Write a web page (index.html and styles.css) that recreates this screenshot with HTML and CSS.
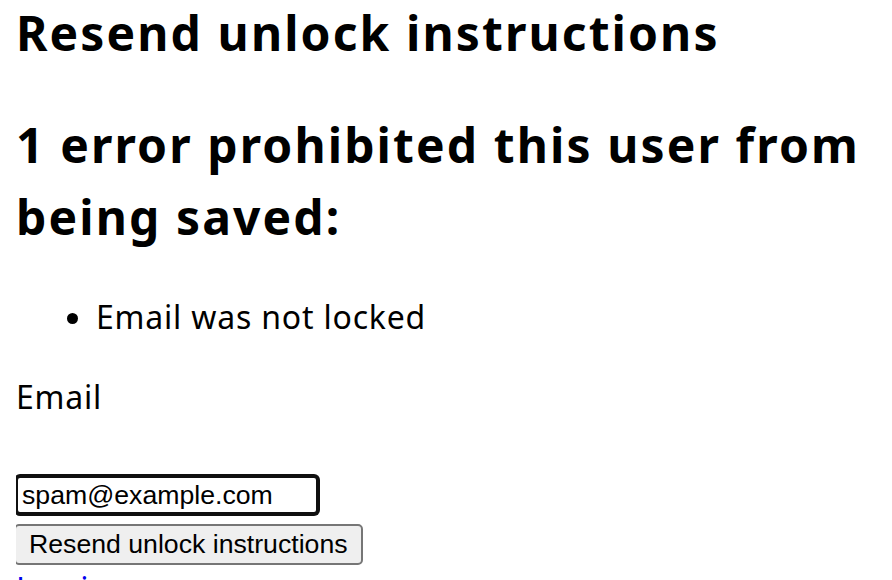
FILE: index.html
```html
<!DOCTYPE html>
<html lang="en">
<head>
<meta charset="utf-8">
<title>Resend unlock instructions</title>
<link rel="stylesheet" href="styles.css">
</head>
<body class="page">
  <h2 class="title">Resend unlock instructions</h2>
  <form class="form" action="#" method="post">
    <div class="errors">
      <h2 class="errors-title">1 error prohibited this user from being saved:</h2>
      <ul class="errors-list">
        <li>Email was not locked</li>
      </ul>
    </div>
    <div class="field">
      <label class="field-label" for="user_email">Email</label>
      <input class="field-input" id="user_email" type="email" value="spam@example.com" autofocus>
    </div>
    <div class="actions">
      <button class="submit" type="submit">Resend unlock instructions</button>
    </div>
  </form>
  <div class="links">
    <a class="link" href="#">Log in</a><br>
    <a class="link" href="#">Sign up</a><br>
  </div>
</body>
</html>
```

FILE: styles.css
```css
html, body {
  overflow: hidden;
}
.page {
  margin: 0 16px;
  font-family: "Noto Sans", "Liberation Sans", sans-serif;
  font-size: 32px;
  line-height: 48px;
  color: #000;
  background: #fff;
}
.title,
.errors-title {
  font-size: 48px;
  line-height: 72px;
  font-weight: 700;
  letter-spacing: 2.1px;
  margin: 0;
}
.title {
  margin-top: -3px;
}
.form {
  margin: 40px 0 0;
}
.errors-title {
  margin-bottom: 40px;
}
.errors-list {
  margin: 0 0 32px;
  padding-left: 80px;
  letter-spacing: 0.8px;
}
.field {
  display: block;
}
.field-label {
  display: block;
  letter-spacing: 0.8px;
}
.field-input {
  display: block;
  box-sizing: border-box;
  margin: 55px 0 0;
  width: 302px;
  height: 38px;
  padding: 2px 4px;
  border: 2px solid #101010;
  border-radius: 4px;
  box-shadow: 0 0 0 2px #101010;
  outline: none;
  font-family: "Liberation Sans", Arial, sans-serif;
  font-size: 26.67px;
  color: #000;
  background: #fff;
}
.field-input:focus {
  outline: none;
}
.actions {
  margin-top: 10px;
}
.submit {
  display: block;
  box-sizing: border-box;
  height: 41px;
  margin: 0 0 0 -2px;
  padding: 0 13px;
  border: 2px solid #767676;
  border-radius: 5px;
  background: #efefef;
  font-family: "Liberation Sans", Arial, sans-serif;
  font-size: 26.67px;
  line-height: 35px;
  color: #000;
}
.links {
  margin-top: 0;
}
.link {
  color: #0000ee;
  text-decoration: underline;
}
```
